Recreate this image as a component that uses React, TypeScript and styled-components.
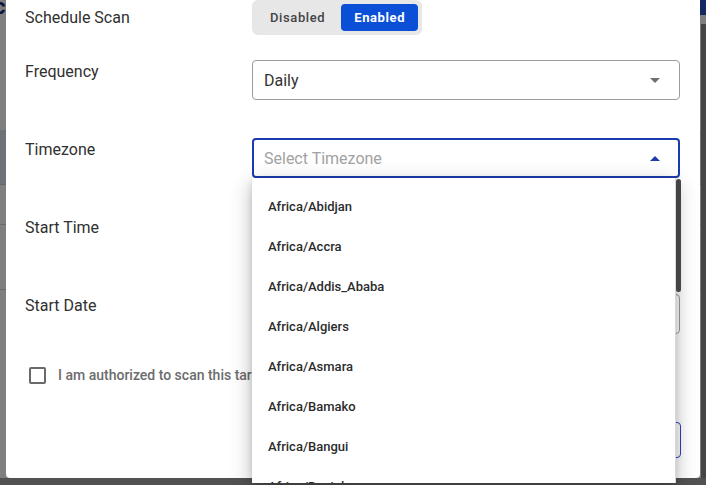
import React from "react";
import styled, { createGlobalStyle } from "styled-components";

const Global = createGlobalStyle`
  html, body { margin: 0; padding: 0; }
  body { font-family: Roboto, "Liberation Sans", sans-serif; overflow: hidden; }
  * { box-sizing: border-box; }
`;

const Screen = styled.div`
  position: relative;
  width: 706px;
  height: 485px;
  overflow: hidden;
  background: #ffffff;
`;

/* ---------- background page (under the modal) ---------- */
const Page = styled.div`
  display: flex;
  flex-direction: column;
  height: 485px;
`;
const PageTop = styled.div`
  display: flex;
  justify-content: space-between;
  align-items: flex-start;
  height: 60px;
`;
const PageTitle = styled.div`
  font-size: 22px;
  font-weight: 700;
  color: #1a2a7a;
  line-height: 14px;
  margin-left: -6px;
`;
const PageAction = styled.div`
  width: 12px;
  height: 15px;
  background: #2a50c8;
`;
const PageText = styled.div`
  font-size: 16px;
  color: #444;
  height: 70px;
  margin-left: -9px;
  display: flex;
  justify-content: space-between;
  span:last-child { margin-right: -6px; }
`;
const TableHead = styled.div`
  height: 55px;
  background: #dde4f0;
  border-bottom: 1px solid #ccc;
`;
const TableRow = styled.div<{ $h: number }>`
  height: ${(p) => p.$h}px;
  border-bottom: 1px solid #d6d6d6;
`;
const PageBody = styled.div`
  flex: 1;
`;
const PageScrollThumb = styled.div`
  position: absolute;
  right: 0;
  top: 24px;
  width: 5px;
  height: 460px;
  background: #8a8a8a;
`;
const PageHScroll = styled.div`
  position: absolute;
  left: 0;
  right: 0;
  bottom: 0;
  height: 7px;
  background: #a4a4a4;
`;

const Backdrop = styled.div`
  position: absolute;
  inset: 0;
  background: rgba(0, 0, 0, 0.5);
`;

/* ---------- dialog ---------- */
const Dialog = styled.div`
  position: absolute;
  left: 6px;
  top: 0;
  width: 694px;
  height: 478px;
  background: #fff;
  border-radius: 0 0 4px 4px;
`;

const Form = styled.div`
  display: grid;
  grid-template-columns: 227px 428px;
  padding: 0 20px 0 19px;
`;

const Label = styled.div<{ $center?: boolean; $gap: number }>`
  font-size: 16px;
  line-height: 22px;
  color: #303030;
  align-self: ${(p) => (p.$center ? "center" : "start")};
  padding-top: ${(p) => (p.$center ? 0 : 1)}px;
  margin-bottom: ${(p) => p.$gap}px;
`;

const Field = styled.div<{ $gap: number }>`
  margin-bottom: ${(p) => p.$gap}px;
`;

const Toggle = styled.div`
  display: inline-flex;
  gap: 2px;
  padding: 4px;
  height: 35px;
  background: #e7e7e7;
  border-radius: 6px;
`;

const ToggleOption = styled.button<{ $active?: boolean }>`
  border: none;
  font-family: Roboto, "Liberation Sans", sans-serif;
  font-size: 13px;
  font-weight: ${(p) => (p.$active ? 700 : 500)};
  letter-spacing: 0.6px;
  padding: 0 ${(p) => (p.$active ? 13 : 14)}px;
  height: 27px;
  border-radius: 4px;
  color: ${(p) => (p.$active ? "#fff" : "#444")};
  background: ${(p) => (p.$active ? "#0a4fd6" : "transparent")};
`;

const Select = styled.div<{ $focused?: boolean }>`
  display: flex;
  align-items: center;
  justify-content: space-between;
  height: 40px;
  padding: 0 ${(p) => (p.$focused ? 18 : 19)}px 0 ${(p) => (p.$focused ? 10 : 11)}px;
  border: ${(p) => (p.$focused ? "2px solid #1c3cae" : "1px solid #9c9c9c")};
  border-radius: 4px;
  background: #fff;
`;

const SelectValue = styled.span<{ $placeholder?: boolean }>`
  font-size: 16px;
  color: ${(p) => (p.$placeholder ? "#a2a2a2" : "#333")};
`;

const Caret = ({ up, color }: { up?: boolean; color: string }) => (
  <svg width="10" height="5" viewBox="0 0 10 5">
    <path d={up ? "M0 5 L5 0 L10 5 Z" : "M0 0 L5 5 L10 0 Z"} fill={color} />
  </svg>
);

const CheckRow = styled.label`
  display: flex;
  align-items: center;
  gap: 12px;
  padding-left: 23px;
  margin-top: -5px;
  height: 17px;
`;

const CheckBox = styled.span`
  width: 17px;
  height: 17px;
  border: 2px solid #6a6a6a;
  border-radius: 2px;
`;

const CheckText = styled.span`
  font-size: 14px;
  font-weight: 500;
  color: #6c6c6c;
  white-space: nowrap;
  margin-top: -1px;
`;

const Actions = styled.div`
  display: flex;
  justify-content: flex-end;
  padding-right: 19px;
  margin-top: 38px;
`;

const OutlineButton = styled.button`
  height: 36px;
  width: 110px;
  border: 1px solid #2146c7;
  border-radius: 4px;
  background: #fff;
`;

/* ---------- dropdown menu ---------- */
const Menu = styled.div`
  position: absolute;
  left: 246px;
  top: 178px;
  width: 424px;
  height: 305px;
  background: #fff;
  border-right: 1px solid #d8d8d8;
  box-shadow: 0 6px 20px rgba(0, 0, 0, 0.28), 0 2px 6px rgba(0, 0, 0, 0.12);
  overflow: hidden;
  padding-top: 8px;
`;

const MenuItem = styled.div`
  height: 40px;
  display: flex;
  align-items: center;
  padding-left: 16px;
  font-size: 13px;
  font-weight: 500;
  color: #2c2c2c;
`;

const ScrollThumb = styled.div`
  position: absolute;
  left: 670px;
  top: 179px;
  width: 5px;
  height: 113px;
  border-radius: 3px;
  background: #454545;
`;

const zones = [
  "Africa/Abidjan",
  "Africa/Accra",
  "Africa/Addis_Ababa",
  "Africa/Algiers",
  "Africa/Asmara",
  "Africa/Bamako",
  "Africa/Bangui",
  "Africa/Banjul",
];

export default function App() {
  return (
    <Screen>
      <Global />
      <Page>
        <PageTop>
          <PageTitle>c</PageTitle>
          <PageAction />
        </PageTop>
        <PageText>
          <span>g</span>
          <span>S</span>
        </PageText>
        <TableHead />
        <TableRow $h={40} />
        <TableRow $h={65} />
        <PageBody />
      </Page>
      <PageScrollThumb />
      <PageHScroll />
      <Backdrop />
      <Dialog>
        <Form>
          <Label $center $gap={25}>Schedule Scan</Label>
          <Field $gap={25}>
            <Toggle>
              <ToggleOption>Disabled</ToggleOption>
              <ToggleOption $active>Enabled</ToggleOption>
            </Toggle>
          </Field>

          <Label $gap={38}>Frequency</Label>
          <Field $gap={38}>
            <Select>
              <SelectValue>Daily</SelectValue>
              <Caret color="#707070" />
            </Select>
          </Field>

          <Label $gap={38}>Timezone</Label>
          <Field $gap={38}>
            <Select $focused>
              <SelectValue $placeholder>Select Timezone</SelectValue>
              <Caret up color="#1c3cae" />
            </Select>
          </Field>

          <Label $gap={38}>Start Time</Label>
          <Field $gap={38}>
            <Select />
          </Field>

          <Label $gap={38}>Start Date</Label>
          <Field $gap={38}>
            <Select />
          </Field>
        </Form>
        <CheckRow>
          <CheckBox />
          <CheckText>I am authorized to scan this target</CheckText>
        </CheckRow>
        <Actions>
          <OutlineButton aria-label="Schedule" />
        </Actions>
        <Menu>
          {zones.map((z) => (
            <MenuItem key={z}>{z}</MenuItem>
          ))}
        </Menu>
        <ScrollThumb />
      </Dialog>
    </Screen>
  );
}
